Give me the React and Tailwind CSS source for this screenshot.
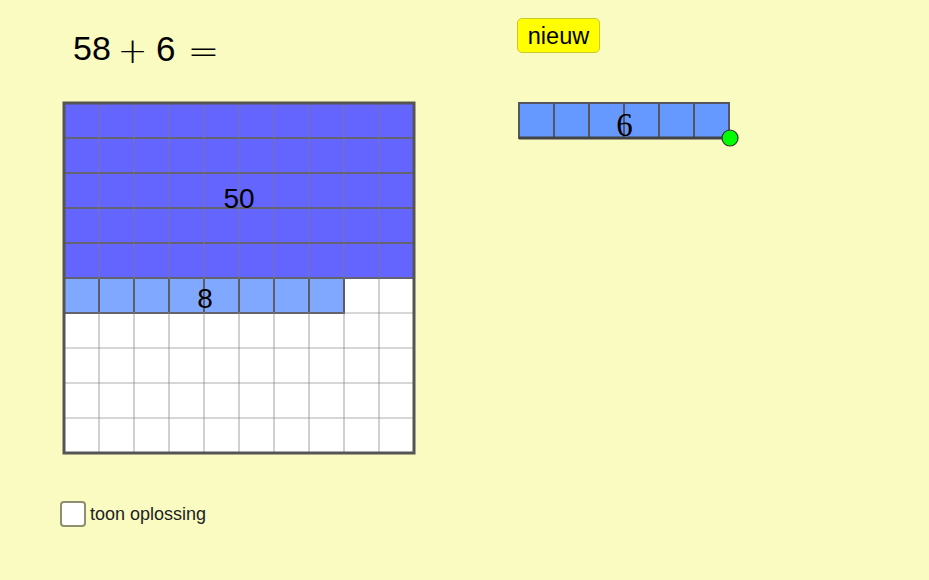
import React from "react";

const CELL = 35;
const OFF = 4;

function HundredGrid() {
  const lines = [];
  for (let i = 0; i <= 10; i++) {
    const p = OFF + i * CELL;
    lines.push(<line key={"v" + i} x1={p} y1={OFF} x2={p} y2={OFF + 350} stroke="#7a7a7a" strokeOpacity="0.7" strokeWidth="1" />);
    lines.push(<line key={"h" + i} x1={OFF} y1={p} x2={OFF + 350} y2={p} stroke="#8c8c8c" strokeOpacity="0.7" strokeWidth="1" />);
  }
  // five full rows of ten
  const tens = [0, 1, 2, 3, 4].map((r) => (
    <rect key={"t" + r} x={OFF} y={OFF + r * CELL} width={350} height={CELL} fill="#6464ff" stroke="#4e4e68" strokeWidth="2" />
  ));
  // eight single units on the sixth row
  const units = [0, 1, 2, 3, 4, 5, 6, 7].map((c) => (
    <rect key={"u" + c} x={OFF + c * CELL} y={OFF + 5 * CELL} width={CELL} height={CELL} fill="#80a8ff" stroke="#4e4e5e" strokeWidth="2" />
  ));
  return (
    <svg width="360" height="360" viewBox="0 0 360 360">
      <rect x={OFF} y={OFF} width={350} height={350} fill="#ffffff" />
      {tens}
      {units}
      {lines}
      <rect x={OFF} y={OFF} width={350} height={350} fill="none" stroke="#555555" strokeWidth="3" />
      <text x="179" y="109" textAnchor="middle" fontFamily="'Liberation Sans', Arial, sans-serif" fontSize="28" fill="#000">50</text>
      <text x="145" y="209" textAnchor="middle" fontFamily="'Liberation Sans', Arial, sans-serif" fontSize="28" fill="#000">8</text>
    </svg>
  );
}

function SixBar() {
  const cells = [0, 1, 2, 3, 4, 5].map((c) => (
    <rect key={c} x={OFF + c * CELL} y={OFF} width={CELL} height={CELL} fill="#6699ff" stroke="#55555f" strokeWidth="2" />
  ));
  return (
    <svg width="230" height="52" viewBox="0 0 230 52">
      {cells}
      <line x1={OFF} y1={OFF + CELL} x2={OFF + 6 * CELL} y2={OFF + CELL} stroke="#444" strokeWidth="3" />
      <text x="109.5" y="37" textAnchor="middle" fontFamily="'Liberation Serif', 'Times New Roman', serif" fontSize="33" fill="#000">6</text>
      <circle cx={OFF + 6 * CELL + 1} cy={OFF + CELL} r="8" fill="#00ff00" stroke="#333" strokeWidth="1.2" />
    </svg>
  );
}

export default function App() {
  return (
    <div className="flex w-[929px] h-[580px] bg-[#f9fbc1] font-['Liberation_Sans',Arial,sans-serif] overflow-hidden">
      <div className="w-[455px] pl-[60px] flex flex-col">
        <div className="mt-[31px] h-[34px] ml-[13px] flex items-start text-[34px] leading-none text-black">
          <span className="w-[38px]">58</span>
          <span className="w-[43px] h-[34px] flex items-center justify-center">
            <span className="font-['DejaVu_Sans',sans-serif] font-[200] text-[36px] leading-none mt-[6px]">+</span>
          </span>
          <span className="ml-[2px] w-[19px] text-[35px]">6</span>
          <span className="w-[57px] h-[34px] flex items-center justify-center">
            <span className="font-['DejaVu_Sans',sans-serif] font-[200] text-[38px] leading-none mt-[5px]">=</span>
          </span>
        </div>
        <div className="mt-[34px]">
          <HundredGrid />
        </div>
        <label className="mt-[42px] flex items-center gap-[4px]">
          <span className="w-[26px] h-[26px] rounded-[4px] border-2 border-[#8e8e72] bg-white" />
          <span className="text-[18px] text-[#222] leading-none">toon oplossing</span>
        </label>
      </div>
      <div className="ml-[60px] flex flex-col">
        <button className="ml-[2px] mt-[18px] w-[83px] h-[35px] rounded-[5px] bg-[#ffff00] border border-[#c9c92a] text-[23.5px] text-black leading-none pt-[2px]">
          nieuw
        </button>
        <div className="mt-[46px]">
          <SixBar />
        </div>
      </div>
    </div>
  );
}
